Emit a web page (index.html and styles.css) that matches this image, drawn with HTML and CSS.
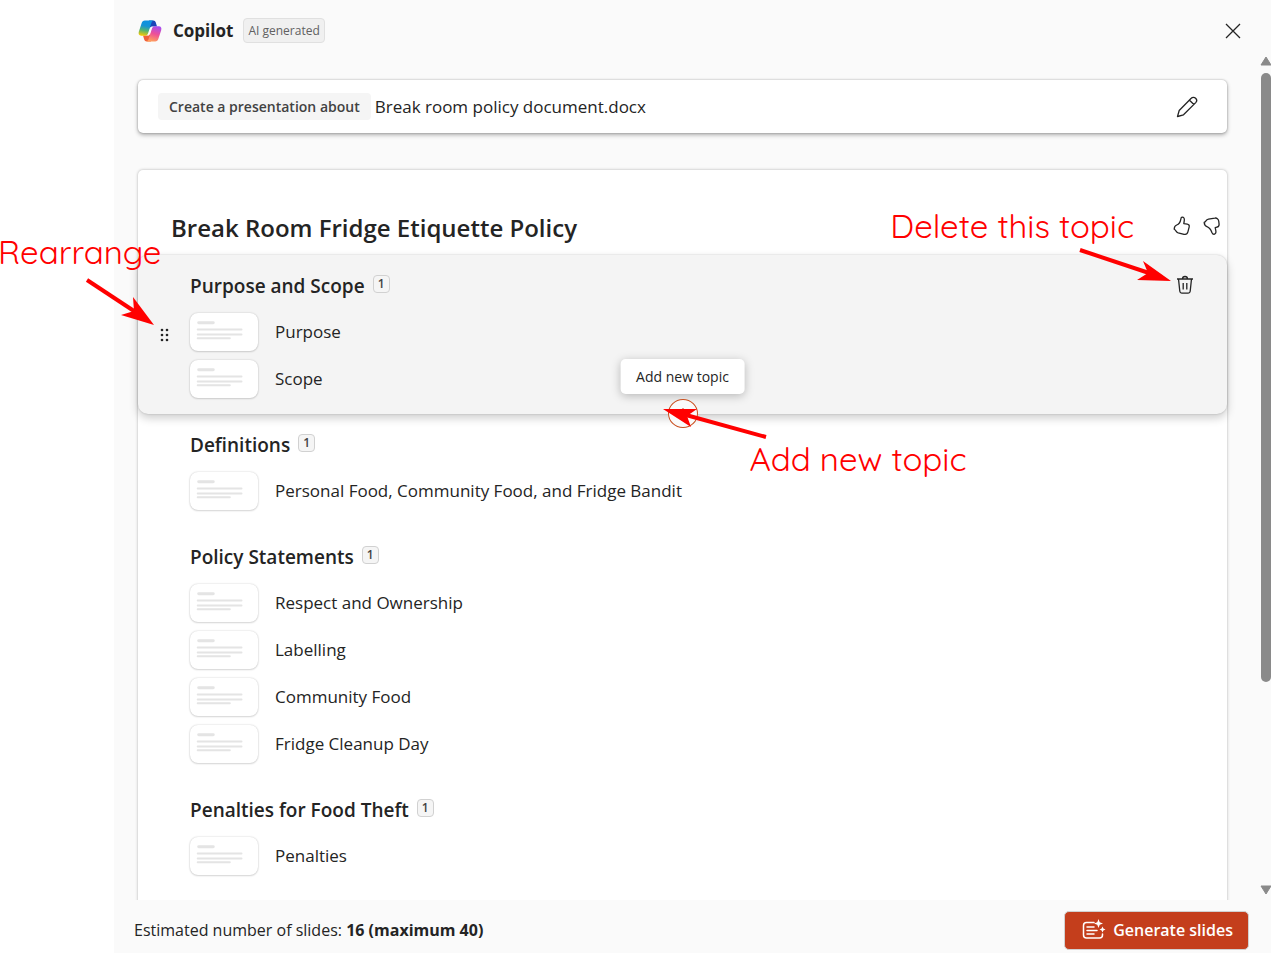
FILE: index.html
```html
<!DOCTYPE html>
<html lang="en">
<head>
    <meta charset="UTF-8">
    <meta name="viewport" content="width=device-width, initial-scale=1.0">
    <title>Copilot - Create a presentation</title>
    <link rel="stylesheet" href="styles.css">
</head>
<body>

<!-- Slide thumbnail, reused by every item -->
<svg width="0" height="0" class="defs">
    <symbol id="thumb" viewBox="0 0 68 39">
        <g stroke="#e4e4e4" stroke-linecap="round" fill="none">
            <path d="M8 10h15" stroke-width="3"/>
            <path d="M7 17h45M7 22h45M7 26h33" stroke-width="2"/>
        </g>
    </symbol>
</svg>

<main class="panel">
    <header class="panel-header">
        <svg class="logo" viewBox="0 0 24 24">
            <defs>
                <linearGradient id="blueGreen" x1="0.5" y1="0" x2="0.3" y2="1">
                    <stop offset="0" stop-color="#0d91e1"/>
                    <stop offset="0.35" stop-color="#1592d6"/>
                    <stop offset="0.65" stop-color="#52b471"/>
                    <stop offset="1" stop-color="#f8c800"/>
                </linearGradient>
                <linearGradient id="pinkOrange" x1="0.7" y1="0" x2="0.4" y2="1">
                    <stop offset="0" stop-color="#a84df0"/>
                    <stop offset="0.5" stop-color="#ee5097"/>
                    <stop offset="1" stop-color="#ffa05c"/>
                </linearGradient>
            </defs>
            <path fill="#1b44b8" d="M11 1.500h4.200c1.400 0 2.200.8 2.600 2l1.200 4H14.500c-1.400 0-2.300.9-2.700 2.200z"/>
            <path fill="#f0603a" d="M13 22.500H8.800c-1.400 0-2.200-.8-2.600-2L5 16.500h4.500c1.400 0 2.300-.9 2.700-2.200z"/>
            <path fill="url(#blueGreen)" d="M6.800 1.500h9c-1.400.3-2 1.300-2.500 2.700L10.200 14c-.6 1.700-1.500 2.700-3.200 2.700H3.200c-2.300 0-3-1.700-2.400-3.900L3.600 4.200C4.200 2.400 5.200 1.500 6.800 1.500z"/>
            <path fill="url(#pinkOrange)" d="M17.200 22.500h-9c1.400-.3 2-1.300 2.500-2.700L13.800 10c.6-1.700 1.500-2.700 3.200-2.700h3.800c2.300 0 3 1.700 2.400 3.900l-2.800 8.600c-.6 1.800-1.600 2.700-3.200 2.700z"/>
            <path fill="#fafafa" d="M12.600 8.300c.6-.7 1.200-.9 2-.9-.6.700-.9 1.500-1.200 2.400l-2 6c-.4.600-1 .8-1.900.8.500-.6.900-1.400 1.200-2.300z"/>
        </svg>
        <h1>Copilot</h1>
        <span class="ai-tag">AI generated</span>
        <button class="icon-button close" aria-label="Close">
            <svg width="18" height="18" viewBox="0 0 18 18"><path d="M2 2l14 14M16 2L2 16"/></svg>
        </button>
    </header>

    <div class="panel-body">
        <div class="content">
            <section class="prompt">
                <span class="prompt-tag">Create a presentation about</span>
                <span class="prompt-text">Break room policy document.docx</span>
                <button class="icon-button edit" aria-label="Edit prompt">
                    <svg width="22" height="22" viewBox="0 0 22 22"><path d="M14 3.500l1.200-1.200a2.900 2.900 0 0 1 4.500 4.300L7.500 18.800l-6 1.700 1.700-6zM13.500 4.200l4.400 4.300"/></svg>
                </button>
            </section>

            <section class="outline">
                <div class="outline-header">
                    <h2>Break Room Fridge Etiquette Policy</h2>
                    <button class="icon-button" aria-label="Like">
                        <svg width="18" height="20" viewBox="0 0 18 20"><path d="M9 1.200c1.800-.2 2.600 1.300 2.300 3.200l-.5 3.300 3.500.4c1.400.2 2.200 1.300 1.900 2.700l-1.300 5.100c-.5 1.900-2 2.900-3.900 2.400l-5.800-1.500c-1-.3-1.600-.8-2.100-1.700-.4-.8-1-1.300-1.900-1.800 0-2.300.8-3.600 2.500-4.300 2.500-1 3.600-3 4.100-5.700.1-1 .3-1.900 1.200-2.100z"/></svg>
                    </button>
                    <button class="icon-button" aria-label="Dislike">
                        <svg width="18" height="20" viewBox="0 0 18 20"><path d="M11 18.300c1.800-.3 2.200-1.800 1.800-3.600l-.6-3 1.700-.5c1.500-.4 2.300-1.500 2.200-3l-.4-3.200c-.3-2-1.900-3.300-3.900-2.900L5.500 3.100c-1.200.2-1.900.6-2.400 1.500-.5.800-1 1.300-1.900 1.800.1 2.300.9 3.500 2.700 4.200 2.600 1 4.100 3.300 5 5.900.4 1 .9 1.800 2.100 1.800z"/></svg>
                    </button>
                </div>

                <article class="topic active">
                    <button class="icon-button drag" aria-label="Rearrange topic">
                        <svg width="10" height="14" viewBox="0 0 10 14"><g class="dots"><circle cx="2" cy="2" r="1.300"/><circle cx="7" cy="2" r="1.300"/><circle cx="2" cy="7" r="1.300"/><circle cx="7" cy="7" r="1.300"/><circle cx="2" cy="12" r="1.300"/><circle cx="7" cy="12" r="1.300"/></g></svg>
                    </button>
                    <h3>Purpose and Scope <span class="badge">1</span></h3>
                    <ul>
                        <li><svg class="thumb"><use href="#thumb"/></svg>Purpose</li>
                        <li><svg class="thumb"><use href="#thumb"/></svg>Scope</li>
                    </ul>
                    <button class="icon-button delete" aria-label="Delete this topic">
                        <svg width="18" height="20" viewBox="0 0 18 20"><path d="M1 4h16M6.500 4a2.500 2.500 0 0 1 5 0M2.500 4l1.300 12.300a2 2 0 0 0 2 1.800h6.400a2 2 0 0 0 2-1.800L15.500 4M7.200 8v6.500M10.800 8v6.500"/></svg>
                    </button>
                    <button class="add-topic" aria-label="Add new topic">
                        <svg width="16" height="16" viewBox="0 0 16 16"><path d="M8 2v12M2 8h12"/></svg>
                    </button>
                    <div class="tooltip" role="tooltip">Add new topic</div>
                </article>

                <article class="topic">
                    <h3>Definitions <span class="badge">1</span></h3>
                    <ul>
                        <li><svg class="thumb"><use href="#thumb"/></svg>Personal Food, Community Food, and Fridge Bandit</li>
                    </ul>
                </article>

                <article class="topic">
                    <h3>Policy Statements <span class="badge">1</span></h3>
                    <ul>
                        <li><svg class="thumb"><use href="#thumb"/></svg>Respect and Ownership</li>
                        <li><svg class="thumb"><use href="#thumb"/></svg>Labelling</li>
                        <li><svg class="thumb"><use href="#thumb"/></svg>Community Food</li>
                        <li><svg class="thumb"><use href="#thumb"/></svg>Fridge Cleanup Day</li>
                    </ul>
                </article>

                <article class="topic">
                    <h3>Penalties for Food Theft <span class="badge">1</span></h3>
                    <ul>
                        <li><svg class="thumb"><use href="#thumb"/></svg>Penalties</li>
                    </ul>
                </article>
            </section>
        </div>

        <div class="scrollbar">
            <svg width="12" height="10" viewBox="0 0 12 10"><path d="M6 1l5 8H1z"/></svg>
            <div class="track"><div class="scroll-thumb"></div></div>
            <svg width="12" height="10" viewBox="0 0 12 10"><path d="M6 9l5-8H1z"/></svg>
        </div>
    </div>

    <footer class="panel-footer">
        <p>Estimated number of slides: <strong>16 (maximum 40)</strong></p>
        <button class="generate">
            <svg width="24" height="22" viewBox="0 0 24 22">
                <path class="line" d="M12 3.500H4.500a3 3 0 0 0-3 3v9.500a3 3 0 0 0 3 3h13a3 3 0 0 0 3-3v-1M5 8h7M5 11.500h10M5 15h7"/>
                <path class="star" d="M16.500 0l1.200 3.300L21 4.500l-3.300 1.200-1.200 3.300-1.200-3.300L12 4.500l3.300-1.200zM20.500 7.500l.9 2.100 2.100.9-2.100.9-.9 2.100-.9-2.100-2.100-.9 2.100-.9z"/>
            </svg>
            Generate slides
        </button>
    </footer>
</main>

<!-- Red call-outs over the panel -->
<div class="note note-rearrange">Rearrange
    <svg width="70" height="50" viewBox="0 0 70 50"><path class="shaft" d="M2 3l50 33"/><path d="M69 48L36 38l13-4-1-14z"/></svg>
</div>
<div class="note note-delete">Delete this topic
    <svg width="94" height="36" viewBox="0 0 94 36"><path class="shaft" d="M2 3l72 24"/><path d="M93 34l-34-1 11-7-5-12z"/></svg>
</div>
<div class="note note-add">Add new topic
    <svg width="106" height="34" viewBox="0 0 106 34"><path class="shaft" d="M104 31L24 9"/><path d="M1 3h34l-10 7 4 11z"/></svg>
</div>

</body>
</html>
```
FILE: styles.css
```css
* {
    box-sizing: border-box;
}

body {
    margin: 0;
    height: 100vh;
    position: relative;
    overflow: hidden;
    background-color: #fff;
    color: #242424;
    font-family: "Segoe UI", "Open Sans", sans-serif;
    font-size: 17px;
}

h1, h2, h3, p, ul {
    margin: 0;
    padding: 0;
}

button {
    font-family: inherit;
    cursor: pointer;
}

.defs {
    position: absolute;
}

.panel {
    display: flex;
    flex-direction: column;
    height: 100%;
    margin-left: 114px;
    background-color: #fafafa;
}

/* Header */
.panel-header {
    display: flex;
    align-items: center;
    height: 56px;
    flex: none;
    padding: 5px 29px 0 24px;
}

.logo {
    width: 24px;
    height: 24px;
    margin-right: 11px;
}

h1 {
    font-size: 17px;
    font-weight: 700;
}

.ai-tag {
    margin-left: 10px;
    padding: 0 4px;
    border: 1px solid #e0e0e0;
    border-radius: 4px;
    background-color: #f0f0f0;
    color: #616161;
    font-size: 12px;
    line-height: 23px;
}

.icon-button {
    display: flex;
    padding: 0;
    border: none;
    background: none;
}

.icon-button svg {
    fill: none;
    stroke: #242424;
    stroke-width: 1.300;
    stroke-linejoin: round;
}

.close {
    margin-left: auto;
}

/* Scrolling area */
.panel-body {
    display: flex;
    flex: 1;
    min-height: 0;
    overflow: hidden;
}

.content {
    flex: 1;
    padding: 24px 31px 0 24px;
}

.scrollbar {
    display: flex;
    flex-direction: column;
    width: 13px;
    padding: 0 0 5px 2px;
}

.scrollbar svg {
    flex: none;
    fill: #8a8a8a;
    stroke: #8a8a8a;
    stroke-linejoin: round;
}

.track {
    flex: 1;
    padding: 7px 0 0 1px;
}

.scroll-thumb {
    height: 75%;
    border-radius: 5px;
    background-color: #8a8a8a;
}

/* Prompt box */
.prompt {
    display: flex;
    align-items: center;
    height: 53px;
    margin-bottom: 37px;
    padding: 0 29px 0 20px;
    border-radius: 5px;
    background-color: #fff;
    box-shadow: 0 0 2px rgba(0, 0, 0, 0.3), 0 2px 4px rgba(0, 0, 0, 0.3);
}

.prompt-tag {
    padding: 0 11px;
    border-radius: 4px;
    background-color: #f5f5f5;
    color: #424242;
    font-size: 14px;
    font-weight: 600;
    line-height: 27px;
}

.prompt-text {
    margin-left: 4px;
}

.edit {
    margin-left: auto;
}

/* Outline */
.outline {
    min-height: 100%;
    border-radius: 5px;
    background-color: #fff;
    box-shadow: 0 0 3px rgba(0, 0, 0, 0.3);
}

.outline-header {
    display: flex;
    align-items: center;
    gap: 12px;
    height: 85px;
    padding: 27px 6px 0 33px;
}

h2 {
    flex: 1;
    padding-top: 4px;
    font-size: 24px;
    font-weight: 600;
    line-height: 32px;
}

.topic {
    position: relative;
    padding: 17px 33px 16px 52px;
}

.active {
    border-radius: 10px;
    background-color: #f4f4f4;
    box-shadow: 0 0 2px rgba(0, 0, 0, 0.2), 0 4px 10px rgba(0, 0, 0, 0.2);
}

h3 {
    display: flex;
    gap: 8px;
    margin-bottom: 12px;
    font-size: 19px;
    font-weight: 600;
    line-height: 28px;
}

.badge {
    width: 17px;
    height: 18px;
    margin-top: 3px;
    border: 1px solid #d1d1d1;
    border-radius: 4px;
    background-color: #f5f5f5;
    color: #424242;
    font-size: 12px;
    line-height: 16px;
    text-align: center;
}

.topic ul {
    display: flex;
    flex-direction: column;
    gap: 8px;
    list-style: none;
}

.topic li {
    display: flex;
    align-items: center;
    gap: 17px;
    height: 39px;
}

.thumb {
    width: 68px;
    height: 38px;
    border-radius: 8px;
    background-color: #fff;
    box-shadow: 0 0 2px rgba(0, 0, 0, 0.2), 0 1px 2px rgba(0, 0, 0, 0.12);
}

.drag {
    position: absolute;
    left: 22px;
    top: 50%;
    transform: translateY(-50%);
}

.icon-button .dots {
    fill: #242424;
    stroke: none;
}

.delete {
    position: absolute;
    top: 20px;
    right: 33px;
}

.add-topic {
    position: absolute;
    left: 50%;
    bottom: -14px;
    z-index: 1;
    display: flex;
    align-items: center;
    justify-content: center;
    width: 30px;
    height: 29px;
    padding: 0;
    border: 1px solid #c94f1f;
    border-radius: 50%;
    background-color: #fafafa;
    transform: translateX(-50%);
}

.add-topic svg {
    stroke: #c43e1c;
}

.tooltip {
    position: absolute;
    left: 50%;
    bottom: 20px;
    padding: 0 16px;
    border-radius: 5px;
    background-color: #fff;
    box-shadow: 0 2px 10px rgba(0, 0, 0, 0.25);
    font-size: 14px;
    line-height: 35px;
    white-space: nowrap;
    transform: translateX(-50%);
}

/* Footer */
.panel-footer {
    display: flex;
    align-items: center;
    justify-content: space-between;
    flex: none;
    height: 53px;
    padding: 7px 22px 0 20px;
    background-color: #fafafa;
    font-size: 16px;
}

.generate {
    display: flex;
    align-items: center;
    gap: 7px;
    height: 39px;
    padding: 0 15px 0 17px;
    border: 1px solid #d1d1d1;
    border-radius: 5px;
    background-color: #c43e1c;
    color: #fff;
    font-size: 16px;
    font-weight: 600;
}

.generate .line {
    fill: none;
    stroke: #fff;
    stroke-width: 1.500;
    stroke-linecap: round;
}

.generate .star {
    fill: #fff;
}

/* Call-outs */
.note {
    position: absolute;
    z-index: 2;
    color: #f00;
    font-family: Quicksand, Lato, sans-serif;
    font-size: 33px;
    font-weight: 400;
    line-height: 40px;
    white-space: nowrap;
}

.note svg {
    position: absolute;
    fill: #f00;
}

.note .shaft {
    stroke: #f00;
    stroke-width: 4;
}

.note-rearrange {
    left: -2px;
    top: 232px;
}

.note-rearrange svg {
    left: 87px;
    top: 45px;
}

.note-delete {
    right: 137px;
    top: 206px;
}

.note-delete svg {
    right: -38px;
    top: 41px;
}

.note-add {
    left: calc(50% + 114px);
    top: 439px;
}

.note-add svg {
    left: -88px;
    top: -33px;
}
```
